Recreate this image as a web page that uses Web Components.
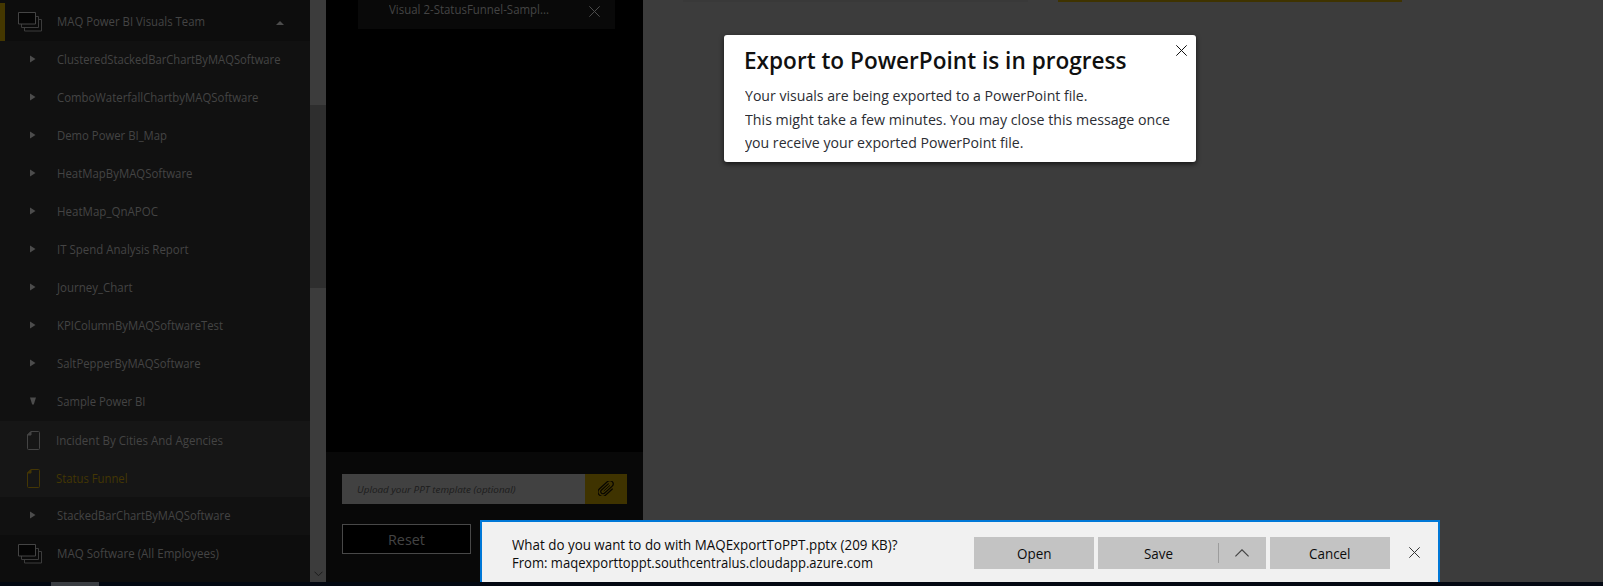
<!DOCTYPE html>
<html lang="en">
<head>
<meta charset="utf-8">
<title>Export to PowerPoint</title>
<style>
html,body{margin:0;height:100%;overflow:hidden;background:#3c3c3c}
body{font-family:"Open Sans","Noto Sans",sans-serif}
</style>
</head>
<body>
<export-app></export-app>
<script>
/* Text run that is condensed or widened to fill the width in its w attribute. */
class FitText extends HTMLElement{
  connectedCallback(){
    const r=this.attachShadow({mode:'open'});
    r.innerHTML='<style>:host{display:inline-block;white-space:nowrap;flex:none}span{display:inline-block;transform-origin:0 50%}</style><span><slot></slot></span>';
    const s=r.querySelector('span'),w=+this.getAttribute('w');
    const k=w/s.getBoundingClientRect().width;
    s.style.transform='scaleX('+k.toFixed(4)+')';
    this.style.width=w+'px';
  }
}
class UiIcon extends HTMLElement{
  connectedCallback(){
    const I={
      stack:'<svg width="24" height="20" fill="#0a0a0a" stroke="#3c3c3c"><path d="M6.500 7.500h17v11.500h-17z"/><path d="M3.500 4.500h17v11h-17z"/><path d="M.5.5h17v11.500h-17z" fill="#050505" stroke="#444"/></svg>',
      right:'<svg width="6" height="8"><path d="M0 .5 5.500 4 0 7.500z" fill="#4c4c4c"/></svg>',
      down:'<svg width="6" height="8"><path d="M0 .5h6L3.800 7.500H2.200z" fill="#4c4c4c"/></svg>',
      up:'<svg width="8" height="4"><path d="M0 4 4 0l4 4z" fill="#4c4c4c"/></svg>',
      page:'<svg width="13" height="19" fill="none" stroke="currentColor"><path d="M4 .5h7.500q1 0 1 1v16q0 1-1 1h-10q-1 0-1-1V4z"/><path d="M4 .5V4H.5z" fill="currentColor"/></svg>',
      close:'<svg width="11" height="11" fill="none" stroke="currentColor" stroke-width="1"><path d="M.3.3 10.700 10.700M10.700.3.3 10.700"/></svg>',
      chev:'<svg width="14" height="8" fill="none" stroke="currentColor" stroke-width="1.200"><path d="M.4 7.400 7 .8l6.600 6.600"/></svg>',
      sdown:'<svg width="9" height="6" fill="none" stroke="#1c1c1c"><path d="M.5.7l4 4 4-4"/></svg>',
      clip:'<svg width="17" height="15" viewBox="0 0 17 15" fill="none" stroke="#080600" stroke-width="1.200" stroke-linecap="round"><g transform="rotate(-42 8.500 7.500)"><path d="M13 5.300H3.800a2.100 2.100 0 0 0 0 4.300H14a3.300 3.300 0 0 0 0-6.600H3.200a4.300 4.300 0 0 0 0 8.800H12.500"/><path d="M5 7.500H12.800" stroke-width=".9"/></g></svg>'
    };
    this.attachShadow({mode:'open'}).innerHTML='<style>:host{display:inline-flex;flex:none}svg{display:block}</style>'+I[this.getAttribute('name')];
  }
}
class NavRow extends HTMLElement{
  connectedCallback(){
    const k=this.getAttribute('kind')||'item';
    this.attachShadow({mode:'open'}).innerHTML=`<style>
:host{display:flex;align-items:center;height:38px;box-sizing:border-box;background:#111;color:#444;font-size:12.500px;padding-bottom:2px}
.i{box-sizing:border-box;width:57px;padding-left:30px;display:flex;flex:none}
:host([kind=group]){background:#0d0d0d}
:host([kind=group]) .i{padding:2px 0 0 18px}
:host([kind=page]){background:#161616;padding-bottom:0}
:host([kind=page]) .i{padding-left:27px;width:56px}
:host([active]){color:#443604}
:host([current]){box-shadow:inset 5px 0 #443700}
.e{margin-left:auto;margin-right:26px;padding-top:4px;display:flex}
</style><div class="i"><ui-icon name="${this.getAttribute('icon')||{item:'right',page:'page',group:'stack'}[k]}"></ui-icon></div><slot></slot><div class="e">${this.hasAttribute('current')?'<ui-icon name="up"></ui-icon>':''}</div>`;
  }
}
class SideNav extends HTMLElement{
  connectedCallback(){
    const row=(t,w,a='')=>`<nav-row ${a}><fit-text w="${w}">${t}</fit-text></nav-row>`;
    this.attachShadow({mode:'open'}).innerHTML=`<style>
:host{display:flex;width:326px;flex:none}
.list{width:310px;padding-top:3px;background:#0d0d0d}
.bar{width:16px;background:#3c3c3c;display:flex;flex-direction:column;align-items:center}
.thumb{margin-top:105px;height:183px;width:16px;background:#2e2e2e}
.bar ui-icon{margin-top:auto;margin-bottom:5px}
</style><div class="list">${
row('MAQ Power BI Visuals Team',148,'kind="group" current')+
row('ClusteredStackedBarChartByMAQSoftware',223.5)+
row('ComboWaterfallChartbyMAQSoftware',201.5)+
row('Demo Power BI_Map',110)+
row('HeatMapByMAQSoftware',135.5)+
row('HeatMap_QnAPOC',101)+
row('IT Spend Analysis Report',131.5)+
row('Journey_Chart',75.5)+
row('KPIColumnByMAQSoftwareTest',166)+
row('SaltPepperByMAQSoftware',143.5)+
row('Sample Power BI',88.5,'icon="down"')+
row('Incident By Cities And Agencies',167,'kind="page"')+
row('Status Funnel',71.5,'kind="page" active')+
row('StackedBarChartByMAQSoftware',173.5)+
row('MAQ Software (All Employees)',162,'kind="group"')
}</div><div class="bar"><div class="thumb"></div><ui-icon name="sdown"></ui-icon></div>`;
  }
}
class ExportPanel extends HTMLElement{
  connectedCallback(){
    this.attachShadow({mode:'open'}).innerHTML=`<style>
:host{display:flex;flex-direction:column;width:317px;flex:none;background:#000;color:#444}
.card{margin-left:32px;width:257px;height:29px;background:#090909;display:flex;box-sizing:border-box;padding-left:30.500px;font-size:12.500px}
.card fit-text{line-height:20px}
.card ui-icon{margin:6px 15px 0 auto;color:#4c4c4c}
.foot{margin-top:auto;height:130px;box-sizing:border-box;background:#080808;padding:22px 16px 0}
.up{display:flex;height:30px}
.in{flex:1;background:#414141;color:#1c1c1c;font-style:italic;font-size:9.800px;line-height:32px;padding-left:15px}
.clip{width:42px;background:#3f3300;display:flex;align-items:center;justify-content:center;padding-bottom:1px;box-sizing:border-box}
.reset{margin-top:20px;width:129px;height:30px;box-sizing:border-box;border:1px solid #484848;background:#000;font-size:15px;display:flex;align-items:center;justify-content:center}
</style><div class="card"><fit-text w="160">Visual 2-StatusFunnel-Sampl...</fit-text><ui-icon name="close"></ui-icon></div>
<div class="foot"><div class="up"><div class="in"><fit-text w="158.500">Upload your PPT template (optional)</fit-text></div><div class="clip"><ui-icon name="clip"></ui-icon></div></div>
<div class="reset"><fit-text w="37">Reset</fit-text></div></div>`;
  }
}
class ProgressDialog extends HTMLElement{
  connectedCallback(){
    this.attachShadow({mode:'open'}).innerHTML=`<style>
:host{position:absolute;left:724px;top:35px;width:472px;height:127px;box-sizing:border-box;background:#fff;border-radius:3px;box-shadow:0 2px 5px rgba(0,0,0,.65);padding:9px 0 0 20px;color:#2b2d33}
h1{margin:0;font-size:23.500px;line-height:32px;font-weight:600;color:#101010;height:40px}
p{margin:0 0 0 1px;font-size:15px;line-height:23px;height:23.500px}
ui-icon{position:absolute;right:9.500px;top:9.500px;color:#111}
</style><h1><fit-text w="382.500">Export to PowerPoint is in progress</fit-text></h1>
<p><fit-text w="342.500">Your visuals are being exported to a PowerPoint file.</fit-text></p>
<p><fit-text w="425">This might take a few minutes. You may close this message once</fit-text></p>
<p><fit-text w="278.500">you receive your exported PowerPoint file.</fit-text></p>
<ui-icon name="close"></ui-icon>`;
  }
}
class DownloadBar extends HTMLElement{
  connectedCallback(){
    this.attachShadow({mode:'open'}).innerHTML=`<style>
:host{position:absolute;left:480px;top:520px;width:960px;height:62px;box-sizing:border-box;border:2px solid #0078d7;border-bottom:0;background:#f1f1f1;color:#0c0c0c;font-size:14px;display:flex}
.msg{width:492px;box-sizing:border-box;padding:14px 0 0 30px;line-height:18px}
.msg div{height:18px}
.b{margin-top:15px;height:32px;width:120px;margin-right:4px;background:#c3c3c3;display:flex;align-items:center;justify-content:center}
.split{width:168px}
.s{flex:1;display:flex;justify-content:center;padding-top:1px}
.c{width:48px;height:20px;border-left:1px solid #9c9c9c;display:flex;align-items:center;justify-content:center;color:#444;box-sizing:border-box;padding-right:1px}
.x{margin:25px 0 0 14.500px;color:#333}
</style><div class="msg"><div><fit-text w="385.500">What do you want to do with MAQExportToPPT.pptx (209 KB)?</fit-text></div><div><fit-text w="361">From: maqexporttoppt.southcentralus.cloudapp.azure.com</fit-text></div></div>
<div class="b"><fit-text w="34.500">Open</fit-text></div>
<div class="b split"><div class="s"><fit-text w="29">Save</fit-text></div><div class="c"><ui-icon name="chev"></ui-icon></div></div>
<div class="b"><fit-text w="41.500">Cancel</fit-text></div>
<ui-icon class="x" name="close"></ui-icon>`;
  }
}
class ExportApp extends HTMLElement{
  connectedCallback(){
    this.attachShadow({mode:'open'}).innerHTML=`<style>
:host{display:flex;flex-direction:column;width:1603px;height:586px;position:relative;overflow:hidden;background:#3c3c3c}
.main{display:flex;height:582px}
.tabs{flex:1;display:flex;padding-left:40px;gap:30px}
.tabs i{width:345px;height:2px;background:#393939}
.tabs i+i{width:344px;background:#3f3300}
.task{height:4px;background:#030812;display:flex}
.task i{margin-left:51px;width:48px;background:#3a3d42}
</style><div class="main"><side-nav></side-nav><export-panel></export-panel><div class="tabs"><i></i><i></i></div></div>
<div class="task"><i></i></div><progress-dialog></progress-dialog><download-bar></download-bar>`;
  }
}
customElements.define('fit-text',FitText);
customElements.define('ui-icon',UiIcon);
customElements.define('nav-row',NavRow);
customElements.define('side-nav',SideNav);
customElements.define('export-panel',ExportPanel);
customElements.define('progress-dialog',ProgressDialog);
customElements.define('download-bar',DownloadBar);
customElements.define('export-app',ExportApp);
</script>
</body>
</html>
